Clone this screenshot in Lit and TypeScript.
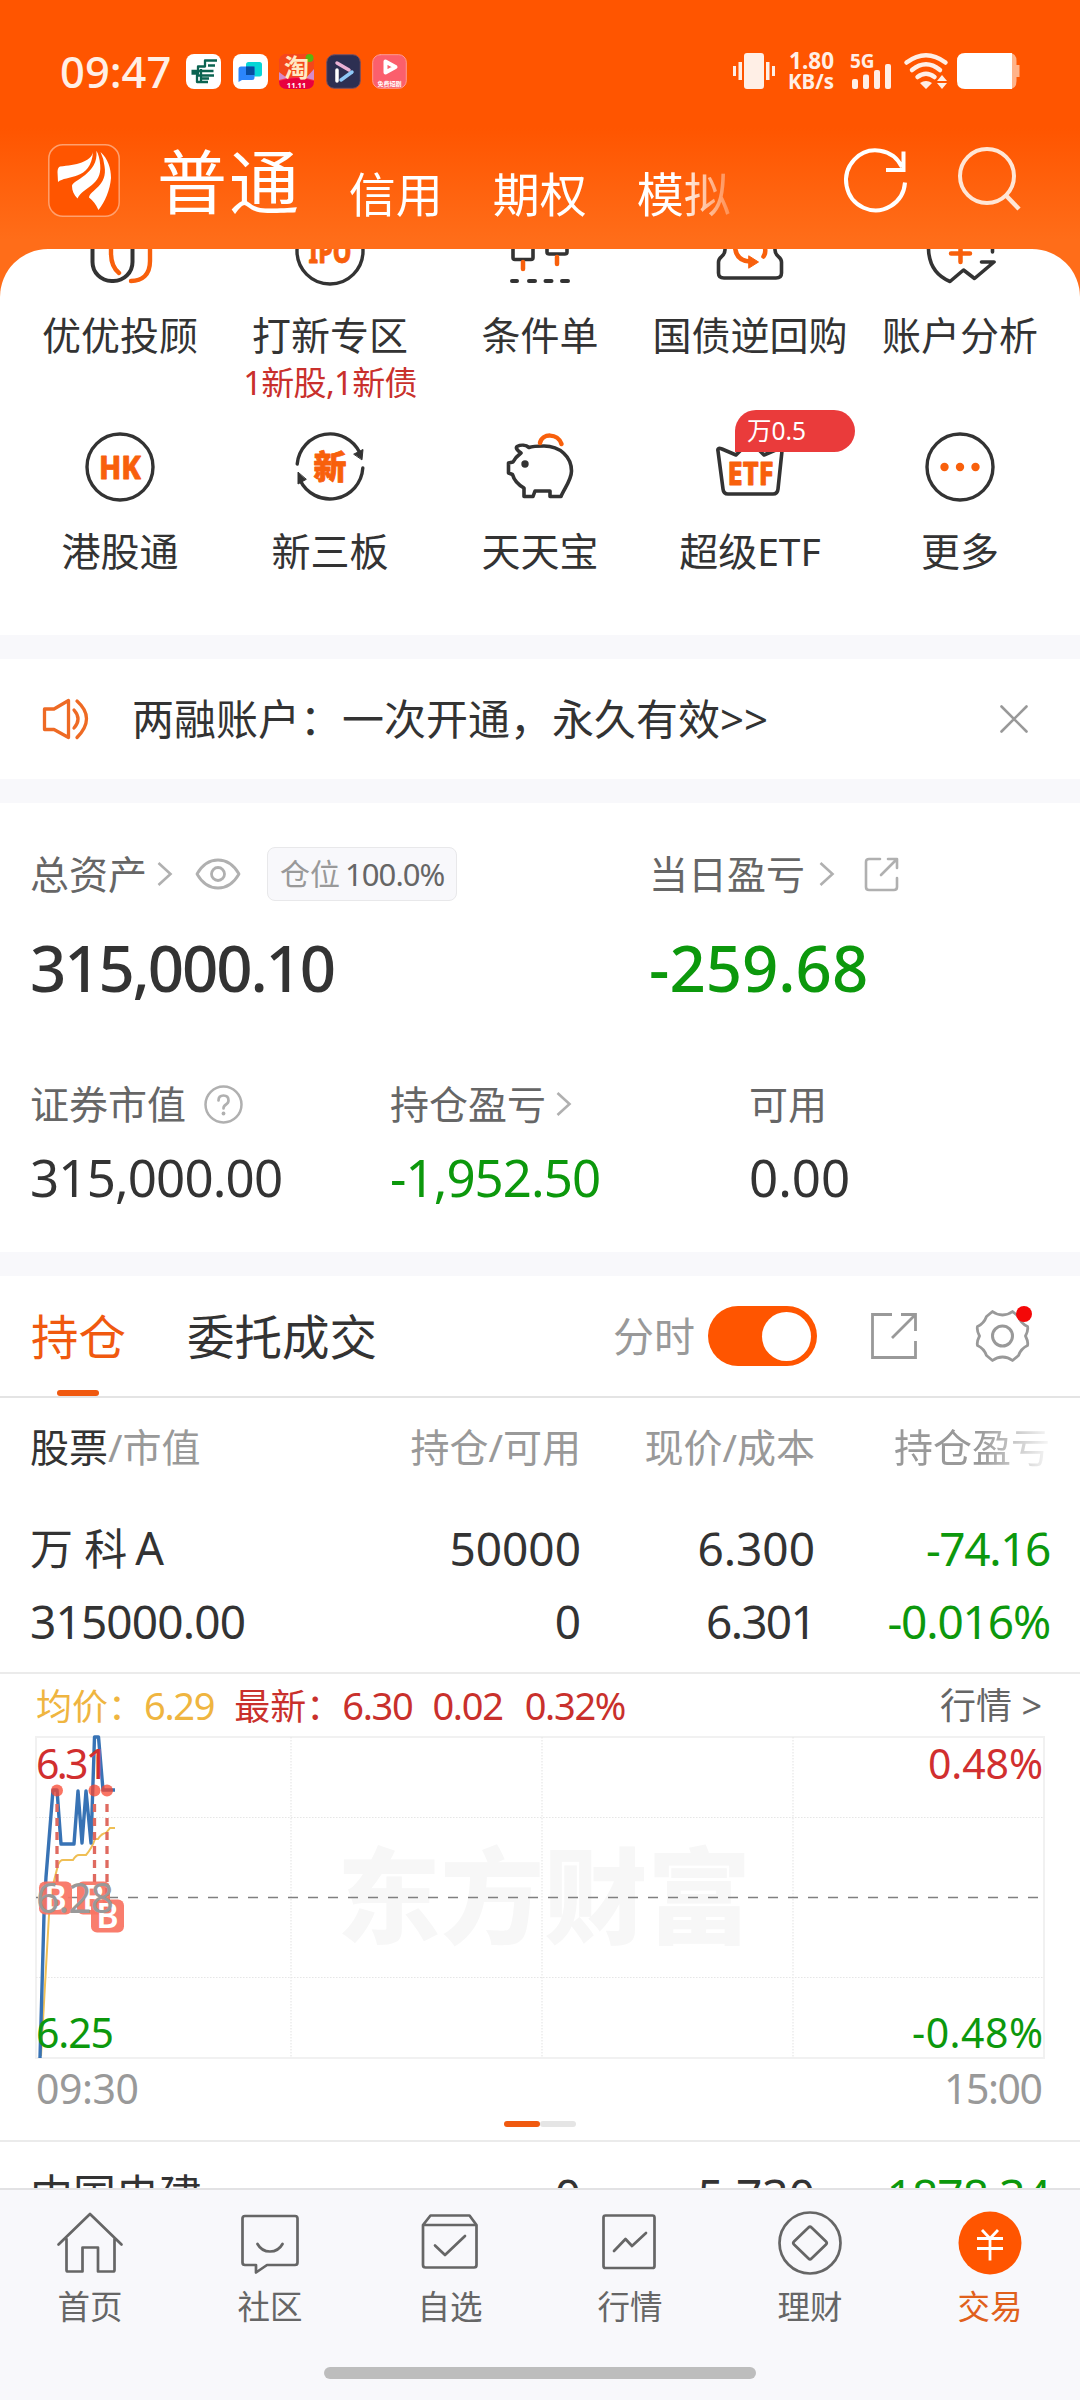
import { LitElement, html, svg, css, nothing, type TemplateResult } from "lit";
import { customElement } from "lit/decorators.js";

const DARK = "#333333";
const ORANGE = "#f8600c";

/* Figures are set tighter the more narrow "1" digits they hold. */
const spacing = (text: string) => {
  const ones = text.split("1").length - 1;
  return ones ? `letter-spacing:${(-(ones * 0.15) / Math.max(1, text.length - 1)).toFixed(4)}em` : nothing;
};
const num = (text: string, cls = "") => html`<span class="num ${cls}" style=${spacing(text)}>${text}</span>`;

const box = (w: number, h: number, body: TemplateResult, cls = "") =>
  html`<svg class="ico ${cls}" width=${w} height=${h} viewBox="0 0 ${w} ${h}" fill="none" stroke-linecap="round" stroke-linejoin="round">${body}</svg>`;

const quickIcons: Record<string, TemplateResult> = {
  advisor: svg`
    <rect x="8.5" y="5" width="40" height="61" rx="19" stroke=${DARK} stroke-width="4"/>
    <path d="M27 20V38C27 48 30 54 35 58M66 20V46C66 60 58 66 47 66" stroke=${ORANGE} stroke-width="4.4"/>`,
  ipo: svg`<circle cx="36" cy="36" r="33" stroke=${DARK} stroke-width="3.4"/>
    <text x="36" y="48" class="glyph" font-size="31" textLength="43" lengthAdjust="spacingAndGlyphs">IPO</text>`,
  order: svg`<rect x="9" y="18" width="20" height="26.500" rx="2" stroke=${DARK} stroke-width="3.600"/>
    <rect x="43" y="8" width="20" height="31" rx="2" stroke=${DARK} stroke-width="3.600"/>
    <path d="M19 47V54M53 42V49" stroke=${ORANGE} stroke-width="4.500"/>
    <path d="M8 66H13M25 66H31M41.500 66H47.500M58 66H64" stroke=${DARK} stroke-width="4"/>`,
  bond: svg`<path d="M11 20V35C11 42 4.500 41 4.500 47V58Q4.500 63 10 63H62Q67.500 63 67.500 58V47C67.500 41 61 42 61 35V20" stroke=${DARK} stroke-width="3.600"/>
    <path d="M21 30C21 41 26 46 36 46.500M50 30C52 35 52 38 49.500 41.500" stroke=${ORANGE} stroke-width="4.500"/>
    <path d="M35 41L44.500 47L35 53Z" fill=${ORANGE} stroke=${ORANGE} stroke-width="1"/>`,
  analysis: svg`<path d="M4.500 20V34C5 50 13 61 26 66.500L39.500 55L50.500 63.500L70 47H57.500M68.500 20V37" stroke=${DARK} stroke-width="3.600"/>
    <path d="M27 38.500H46M36.500 29V47" stroke=${ORANGE} stroke-width="4.500"/>`,
  hk: svg`<circle cx="36" cy="36" r="33" stroke=${DARK} stroke-width="3.4"/>
    <text x="36" y="47.500" class="glyph" font-size="32" textLength="42" lengthAdjust="spacingAndGlyphs">HK</text>`,
  neeq: svg`<path d="M3.200 33A33 33 0 0 1 66 22M68.800 37A33 33 0 0 1 6 49" stroke=${DARK} stroke-width="3.400"/>
    <path d="M60 23L69 18.500L68 28.500ZM12 48.500L4 53L4 41.500Z" fill=${DARK} stroke=${DARK} stroke-width="1"/>
    <text x="36" y="48" class="glyph" font-size="33">新</text>`,
  pig: svg`<path d="M17 22C13 19 11.500 17 13 15.500C17 13.500 22 14 25 16.500C29 15 34 15 40 15C56 15 67.500 26 67.500 40C67.500 49 60 58 57 65.500H46V60H31L29 65.500H20V57C13 53 10 49 8.500 43.500L4.500 42V32L9 31C11 27 13 25 17 22Z" stroke=${DARK} stroke-width="3.600"/>
    <circle cx="21" cy="33" r="3.700" fill=${DARK}/>
    <path d="M36 12C38 2 54 2 57.500 13" stroke=${ORANGE} stroke-width="4.500"/>`,
  etf: svg`<path d="M4 20Q3 16 8 18L22 24L36 10L50 24L64 18Q69 16 68 20L64 58Q63.500 63 59 63H14Q9.500 63 9 58Z" stroke=${DARK} stroke-width="3.600"/>
    <text x="36.500" y="54" class="glyph" font-size="32" textLength="46" lengthAdjust="spacingAndGlyphs">ETF</text>`,
  more: svg`<circle cx="36" cy="36" r="33" stroke=${DARK} stroke-width="3.400"/>
    <g fill=${ORANGE}><circle cx="20.500" cy="36" r="4.200"/><circle cx="36" cy="36" r="4.200"/><circle cx="51.500" cy="36" r="4.200"/></g>`,
};

interface Quick { icon: string; label: string; note?: string; badge?: string }
const quick: Quick[] = [
  { icon: "advisor", label: "优优投顾" },
  { icon: "ipo", label: "打新专区", note: "1新股,1新债" },
  { icon: "order", label: "条件单" },
  { icon: "bond", label: "国债逆回购" },
  { icon: "analysis", label: "账户分析" },
  { icon: "hk", label: "港股通" },
  { icon: "neeq", label: "新三板" },
  { icon: "pig", label: "天天宝" },
  { icon: "etf", label: "超级ETF", badge: "万0.5" },
  { icon: "more", label: "更多" },
];

const chevron = box(18, 26, svg`<path d="M2.500 2L14.500 13L2.500 24" stroke="#b0b0b0" stroke-width="2.600" stroke-linecap="butt" stroke-linejoin="miter"/>`, "chev");

const nav: { label: string; icon: TemplateResult; active?: boolean }[] = [
  { label: "首页", icon: svg`<path d="M1.500 34.500L33 4L64.500 34.500M9.500 29V60Q9.500 61.500 11 61.500H25.500V37.500H41V61.500H56Q57.500 61.500 57.500 60V29"/>` },
  { label: "社区", icon: svg`<path d="M8 6H58Q60.500 6 60.500 8.500V52.500Q60.500 55 58 55H30L19 62.500V55H8Q5.500 55 5.500 52.500V8.500Q5.500 6 8 6ZM20.500 34C26 44 40 44 45.500 34"/>` },
  { label: "自选", icon: svg`<path d="M6 15L13.500 5.500H52.500L59.500 15V55Q59.500 57.500 57 57.500H8.500Q6 57.500 6 55V15H59.500M18 35.500L28 45L48 26"/>` },
  { label: "行情", icon: svg`<rect x="6.500" y="5.500" width="51" height="52.500" rx="2"/><path d="M17 41L28.500 29L35 36L49 23"/>` },
  { label: "理财", icon: svg`<circle cx="33" cy="33" r="30.500"/><path d="M31.500 17.500Q33 16 34.500 17.500L49 31.500Q50.500 33 49 34.500L34.500 48.500Q33 50 31.500 48.500L17 34.500Q15.500 33 17 31.500Z"/>` },
  { label: "交易", active: true, icon: svg`<circle cx="33" cy="33" r="31.500" fill="#ff5500" stroke="none"/><path d="M25 20L33 28.500L41 20M20 28.500H46M20 38.500H46M33 28.500V50.500" stroke="#fff" stroke-width="2.800" stroke-linecap="butt"/>` },
];

const statusApps = [
  svg`<rect width="35" height="35" rx="8" fill="#fff"/><path d="M31 6.500H19V12.500H12V19.500H5.500M29 11.500H22M27.500 17H5.500M28 21.500H11V28H22M15 15V29M23 24.500H15" stroke="#0b6350" stroke-width="2.300" stroke-linecap="butt"/>`,
  svg`<rect width="35" height="35" rx="8" fill="#fff"/><rect x="13" y="8" width="16" height="14.500" rx="2.500" fill="#06d6d6"/><path d="M8 12.500H19Q21.500 12.500 21.500 15V23.500Q21.500 26 19 26H9L5.500 28V15Q5.500 12.500 8 12.500Z" fill="#2b86fb"/><rect x="13" y="12.500" width="8.500" height="8.500" fill="#074da0"/>`,
  svg`<rect width="35" height="35" rx="8" fill="#f6324a"/><path d="M0 9Q0 0 9 0H26Q35 2 35 9V26Q18 20 0 25Z" fill="#f4471a"/><path d="M0 18L8 24L0 26ZM35 15L27 24L35 26Z" fill="#d58ac8"/><circle cx="30.500" cy="4" r="4" fill="#5ab510"/><path d="M0 27Q18 21 35 27Q35 35 27 35H8Q0 35 0 27Z" fill="#e8003f"/><text x="17.500" y="23" class="mini" font-size="25" fill="#ffe9c4">淘</text><text x="17.500" y="34" class="mini" font-size="7.500" fill="#fff">11.11</text>`,
  svg`<rect x=".7" y=".7" width="33.600" height="33.600" rx="7.500" fill="#2d2f52" stroke="#7a5060" stroke-width="1"/><path d="M11 16V27" stroke="#fff" stroke-width="3.500"/><path d="M11 9L23 16" stroke="#eab2d6" stroke-width="3.500"/><path d="M26 18L15 26" stroke="#8fc9f7" stroke-width="3.500"/>`,
  svg`<rect x=".7" y=".7" width="33.600" height="33.600" rx="7.500" fill="#fb5f6c" stroke="#ff9a90" stroke-width="1"/><path d="M13.500 7.500V18.500L23.500 13Z" stroke="#fff" stroke-width="4"/><text x="17.500" y="32" class="mini" font-size="6" fill="#fff">免费短剧</text>`,
];

/* Buy marks: x of the trade, then the centre of its flag. */
const marks = [
  { x: 57, fx: 55, fy: 1898 },
  { x: 94.5, fx: 93, fy: 1898 },
  { x: 107, fx: 107, fy: 1916 },
];

@customElement("app-root")
export class AppRoot extends LitElement {
  static styles = css`
    :host { display: block; width: 1080px; height: 2400px; overflow: hidden; }
    * { box-sizing: border-box; }
    .app { display: flex; flex-direction: column; width: 1080px; height: 2400px; background: #ff6d19; color: #333;
      font-family: "Noto Sans", "Noto Sans CJK SC", sans-serif; font-size: 39px; line-height: 48px; white-space: nowrap; }
    .ico { display: block; flex: none; overflow: visible; }
    .num { font-kerning: none; }
    .glyph { font-weight: 800; fill: #f8600c; stroke: #f8600c; stroke-width: 0.8px; text-anchor: middle; }
    .mini { font-weight: 700; text-anchor: middle; }
    .top { height: 249px; flex: none; background: linear-gradient(#ff5500 0, #ff5500 128px, #ff6d19 240px); }
    .status { display: flex; align-items: center; height: 142px; padding: 0 60px 0 60px; color: #ffefe6; }
    .time { font-size: 43.500px; font-weight: 500; width: 126px; }
    .apps { display: flex; gap: 11.500px; flex: 1; }
    .rate { display: flex; flex-direction: column; width: 48px; margin: 0 15px 0 11px; align-items: flex-end; font-size: 22.500px; line-height: 21px; font-weight: 700; }
    .rate .unit { font-size: 20.500px; }
    .net { display: flex; flex-direction: column; width: 42px; font-size: 19px; line-height: 16px; font-weight: 700; margin: 0 12px 0 1px; height: 36px; }
    .battery { margin-left: 9px; }
    .head { display: flex; height: 76px; align-items: center; padding: 0 58px 0 48px; color: #fff; }
    .head .on { font-size: 70px; line-height: 72px; letter-spacing: 2px; margin: 4px 0 0 37px; width: 195px; }
    .modes { display: flex; gap: 50px; font-size: 47px; line-height: 76px; margin-top: 28px; width: 400px;
      -webkit-mask-image: linear-gradient(90deg, #000 330px, transparent 400px); mask-image: linear-gradient(90deg, #000 330px, transparent 400px); }
    .refresh { margin-left: 103px; }
    .find { margin-left: 50px; }
    .body { flex: 1; min-height: 0; overflow: hidden; border-radius: 48px 48px 0 0; background: #fff; }
    .quick { display: grid; grid-template-columns: repeat(5, 210px); grid-auto-rows: 216px; justify-content: center; height: 420px; margin-top: -34px; }
    .cell { position: relative; display: flex; flex-direction: column; align-items: center; }
    .cell .label { margin-top: 24px; }
    .note { color: #c9302c; font-size: 33px; letter-spacing: -0.7px; }
    .tag { position: absolute; left: 90px; top: -21px; width: 120px; height: 42px; border-radius: 21px 21px 21px 0; background: #ea3b3b; color: #fff; font-size: 24.500px; line-height: 42px; padding-left: 12px; }
    .gap { height: 24px; background: #f8f8fb; }
    .notice { display: flex; align-items: center; height: 120px; padding: 0 52px 0 41px; font-size: 42px; }
    .notice .msg { flex: 1; margin-left: 42px; }
    .assets { height: 449px; padding: 44px 30px 0; color: #666; }
    .two { display: grid; grid-template-columns: 619px 1fr; }
    .three { display: grid; grid-template-columns: 360px 359px 1fr; margin-top: 69px; }
    .cap { display: flex; align-items: center; height: 54px; }
    .chev { margin-left: 9px; }
    .wide .chev { margin-left: 13px; }
    .eye { margin-left: 21px; }
    .pos { display: flex; align-items: center; gap: 5px; height: 54px; width: 190px; border: 1.500px solid #e8e8ea; border-radius: 8px; background: #f8f8fb; margin-left: 26px; padding-left: 12px; color: #999; font-size: 30px; }
    .pos .num { color: #666; font-size: 31px; }
    .share { margin-left: 28px; }
    .help { margin-left: 18px; }
    .big { font-size: 63.500px; line-height: 80px; font-weight: 500; color: #333; margin-top: 27px; }
    .mid { font-size: 51px; line-height: 64px; color: #333; margin-top: 14px; }
    .big.green, .mid.green, .green { color: #0c980c; }
    .tabs { display: flex; height: 122px; border-bottom: 2px solid #e4e4e4; padding: 0 50px 0 31px; font-size: 47.500px; line-height: 121px; }
    .tab { position: relative; margin-right: 61px; }
    .tab.sel { color: #f0590f; }
    .tab.sel::after { content: ""; position: absolute; left: 26px; bottom: 0; width: 42px; height: 6px; border-radius: 3px; background: #f0590f; }
    .tools { display: flex; align-items: center; flex: 1; justify-content: flex-end; color: #999; font-size: 41px; }
    .switch { width: 109px; height: 60px; border-radius: 30px; background: #ff5500; margin: 0 54px 0 13px; display: flex; justify-content: flex-end; align-items: center; padding-right: 6px; }
    .knob { width: 49px; height: 49px; border-radius: 50%; background: #fff; }
    .gearwrap { position: relative; margin-left: 58px; }
    .dot { position: absolute; right: -2px; top: -3px; width: 16px; height: 16px; border-radius: 50%; background: #f40808; }
    .row { display: grid; grid-template-columns: 351px 200px 234px 235px; align-content: start; padding: 0 30px; text-align: right; }
    .row > :nth-child(4n + 1) { text-align: left; }
    .cols { height: 97px; line-height: 97px; color: #999; }
    .cols b { font-weight: 400; color: #333; }
    .fade { -webkit-mask-image: linear-gradient(90deg, #000 165px, transparent 240px); mask-image: linear-gradient(90deg, #000 165px, transparent 240px); }
    .hold { height: 179px; padding-top: 17px; font-size: 46px; line-height: 72px; border-bottom: 2px solid #ebebeb; }
    .hold .name { font-size: 43px; }
    .hold .share-class { margin-left: 8px; font-size: 45px; }
    .info { display: flex; height: 61px; line-height: 63px; padding: 0 38px 0 36px; font-size: 36px; color: #c9302c; }
    .info .num { font-size: 38px; letter-spacing: -1.300px; }
    .info .avg { color: #efb540; margin-right: 20px; }
    .info .n { margin-right: 20px; }
    .info span.num.n { margin-right: 22px; }
    .info .more { color: #666; margin-left: auto; }
    .chart { display: block; }
    .chart text { font-size: 41px; font-kerning: none; }
    .chart text.wm { font-size: 104px; font-weight: 900; fill: #f7f7f7; }
    .chart text.flag { font-size: 34px; font-weight: 600; fill: #fff; text-anchor: middle; }
    .pager { display: flex; justify-content: center; height: 21px; border-bottom: 2px solid #ebebeb; }
    .pager i { width: 36px; height: 6px; border-radius: 3px; background: #e5e5e5; }
    .pager i.now { background: #f0590f; }
    .nav { flex: none; height: 212px; background: #f8f8fb; border-top: 2px solid #e2e2e4; display: flex; flex-direction: column; align-items: center; }
    .items { display: grid; grid-template-columns: repeat(6, 180px); height: 177px; padding-top: 20px; }
    .item { display: flex; flex-direction: column; align-items: center; font-size: 32.500px; line-height: 40px; color: #666; }
    .item .ico { stroke: #666; stroke-width: 2.700px; margin-bottom: 11px; }
    .item.active { color: #e0601c; }
    .pill { width: 432px; height: 12px; border-radius: 6px; background: #bdbdbd; }
  `;

  private header() {
    return html`<header class="top">
      <div class="status">
        <span class="time">09:47</span>
        <div class="apps">${statusApps.map((a) => box(35, 35, a))}</div>
        ${box(42, 36, svg`<g fill="#ffefe6"><rect x="11" y="0" width="20" height="36" rx="3"/><rect x="5.500" y="9" width="3.500" height="18"/><rect x="0" y="13" width="3" height="10"/><rect x="33" y="9" width="3.500" height="18"/><rect x="39" y="13" width="3" height="10"/></g>`)}
        <div class="rate"><span>1.80</span><span class="unit">KB/s</span></div>
        <div class="net"><span>5G</span>
          ${box(42, 20, svg`<g fill="#ffefe6"><rect x="2" y="10" width="6" height="10" rx="2"/><rect x="13" y="5.500" width="6" height="14.500" rx="2"/><rect x="24" y="1" width="6" height="19" rx="2"/><rect x="35" y="-5" width="6" height="25" rx="2"/></g>`)}
        </div>
        ${box(44, 36, svg`<path d="M2.500 9.500Q22 -5 41.500 9.500M8 17Q22 5.500 36 17M13.500 24Q22 17.500 30.500 24" stroke="#ffefe6" stroke-width="4.500"/><path d="M22 36L16 30Q22 26 28 30ZM38 22L43 28H33ZM38 36L43 30H33Z" fill="#ffefe6"/>`)}
        ${box(63, 36, svg`<path d="M45 0H52Q59.500 0 59.500 8V12H62.500V24H59.500V28Q59.500 36 52 36H45Z" fill="#ffb38a"/><path d="M8 0H55V36H8Q0 36 0 28V8Q0 0 8 0Z" fill="#fff"/>`, "battery")}
      </div>
      <div class="head">
        ${box(72, 73, svg`<rect x=".8" y=".8" width="70.400" height="71.400" rx="14" fill="#ff5500" stroke="#ffa06e" stroke-width="1.500"/>
          <g fill="#fff"><path d="M45 8C43 18 28 21 12 22.500Q9.500 23.500 9.500 28L10 38C18 31 43 37 45 8Z"/><path d="M48.400 6.700C51 30 24 36 24 42C24 47 26 51 29.500 54.500C36 42 54 42 52.200 21C51.800 15 50.500 10 48.400 6.700Z"/><path d="M52.500 8C60 15 63 24 63 34C62 46 57 58 50.500 66Q47 58 41 53.500C42 46 60 42 56.500 22Q55.500 14 52.500 8Z"/></g>`)}
        <span class="on">普通</span>
        <div class="modes"><span>信用</span><span>期权</span><span>模拟</span></div>
        ${box(63, 64, svg`<path d="M60 34.500A29.500 30 0 1 1 57 19M41 22H58.500V3.500" stroke="#fff" stroke-width="4" stroke-linecap="butt" stroke-linejoin="miter"/>`, "refresh")}
        ${box(64, 66, svg`<circle cx="29" cy="29" r="27" stroke="#ffe6d6" stroke-width="4"/><path d="M48 48.500L61 62" stroke="#ffe6d6" stroke-width="4.500" stroke-linecap="butt"/>`, "find")}
      </div>
    </header>`;
  }

  private assets() {
    return html`<section class="assets">
      <div class="two">
        <div><div class="cap">总资产${chevron}
          ${box(46, 32, svg`<path d="M2 16Q10 2 23 2T44 16Q36 30 23 30T2 16Z" stroke="#b0b0b0" stroke-width="2.800"/><circle cx="23" cy="16" r="6.500" stroke="#b0b0b0" stroke-width="2.800"/>`, "eye")}
          <span class="pos">仓位${num("100.0%")}</span></div>
          <div class="big">${num("315,000.10")}</div></div>
        <div><div class="cap wide">当日盈亏${chevron}
          ${box(35, 35, svg`<path d="M16 2H5Q2 2 2 5V30Q2 33 5 33H30Q33 33 33 30V21M24 2H33V11M32 3L17 18" stroke="#b0b0b0" stroke-width="2.600"/>`, "share")}</div>
          <div class="big green">${num("-259.68")}</div></div>
      </div>
      <div class="three">
        <div><div class="cap">证券市值
          ${box(39, 39, svg`<circle cx="19.500" cy="19.500" r="18" stroke="#b0b0b0" stroke-width="2.500"/><path d="M14.500 15.500Q14.500 10.500 19.500 10.500T24.500 15.500Q24.500 18 22 19.500T19.500 23.500" stroke="#b0b0b0" stroke-width="2.700"/><circle cx="19.500" cy="28.500" r="1.900" fill="#b0b0b0"/>`, "help")}</div>
          <div class="mid">${num("315,000.00")}</div></div>
        <div><div class="cap">持仓盈亏${chevron}</div><div class="mid green">${num("-1,952.50")}</div></div>
        <div><div class="cap">可用</div><div class="mid">${num("0.00")}</div></div>
      </div>
    </section>`;
  }

  private fig(x: number, y: number, text: string, len: number, color: string, end = false) {
    return svg`<text x=${x} y=${y} fill=${color} textLength=${len} text-anchor=${end ? "end" : "start"}>${text}</text>`;
  }

  private chart() {
    return html`<svg class="chart" width="1080" height="386" viewBox="0 1735 1080 386" fill="none">
      <text class="wm" x="337" y="1936" textLength="414" lengthAdjust="spacingAndGlyphs">东方财富</text>
      <rect x="36" y="1737" width="1008" height="321" stroke="#f1f1f1" stroke-width="2"/>
      <path d="M291 1737V2058M542 1737V2058M793 1737V2058M36 1817.500H1044M36 1977.500H1044" stroke="#e6e6e6" stroke-width="1.200" stroke-dasharray="1.500 1.500"/>
      <path d="M36 1897.500H1044" stroke="#808080" stroke-width="1.300" stroke-dasharray="10 10" stroke-dashoffset="8"/>
      <path d="M41 2056L45 1985L49 1915L53 1885L58 1865Q60 1860 63 1860H73Q76 1855 79 1855H86Q92 1848 95 1839H98Q102 1833 106 1833L110 1828H115" stroke="#efbf55" stroke-width="2"/>
      <path d="M40 2058L44 1915L46 1877L53 1790H57L61 1844H74L78 1791L82 1843L86 1791L91 1843L94.500 1737H98.500L103 1790H115" stroke="#3873b5" stroke-width="3.400" stroke-linejoin="round"/>
      ${marks.map((m) => svg`
        <path d="M${m.x} 1804V${m.fy - 16}" stroke="#df6a60" stroke-width="3.300" stroke-dasharray="8 6"/>
        <circle cx=${m.x} cy="1790.500" r="6" fill="#f8452f" opacity=".75"/>
        <rect x=${m.fx - 16} y=${m.fy - 16.5} width="33" height="33" rx="6" fill="#f97362" opacity=".93"/>
        <text class="flag" x=${m.fx + 0.5} y=${m.fy + 12}>B</text>`)}
      ${this.fig(36, 1779, "6.31", 73, "#d12f2f")}
      ${this.fig(36, 1913, "6.28", 78, "#999")}
      ${this.fig(36, 2048, "6.25", 78, "#0c980c")}
      ${this.fig(1043, 1779, "0.48%", 115, "#d12f2f", true)}
      ${this.fig(1043, 2048, "-0.48%", 131, "#0c980c", true)}
      ${this.fig(36, 2104, "09:30", 103, "#999")}
      ${this.fig(1043, 2104, "15:00", 99, "#999", true)}
    </svg>`;
  }

  render() {
    return html`<div class="app">
      ${this.header()}
      <main class="body">
        <section class="quick">
          ${quick.map((q) => html`<div class="cell">
            ${box(72, 72, quickIcons[q.icon])}
            <span class="label">${q.label}</span>
            ${q.note ? html`<span class="note">${q.note}</span>` : nothing}
            ${q.badge ? html`<span class="tag">${q.badge}</span>` : nothing}
          </div>`)}
        </section>
        <div class="gap"></div>
        <section class="notice">
          ${box(49, 42, svg`<path d="M3.500 11H13L27.500 2.500V39.500L13 31.500H3.500ZM33 12Q41 21 33 30M36 3Q55 20 36 39.500" stroke="#ee6a24" stroke-width="3.300"/>`)}
          <span class="msg">两融账户：一次开通，永久有效&gt;&gt;</span>
          ${box(28, 28, svg`<path d="M1.500 1.500L26.500 26.500M26.500 1.500L1.500 26.500" stroke="#999" stroke-width="2.600"/>`)}
        </section>
        <div class="gap"></div>
        ${this.assets()}
        <div class="gap"></div>
        <section class="tabs">
          <span class="tab sel">持仓</span><span class="tab">委托成交</span>
          <div class="tools"><span>分时</span><span class="switch"><i class="knob"></i></span>
            ${box(46, 46, svg`<path d="M21 1.500H1.500V44.500H44.500V28M30 1.500H44.500V18M43.500 2.500L21 25" stroke="#999" stroke-width="2.800" stroke-linecap="butt" stroke-linejoin="miter"/>`)}
            <span class="gearwrap">${box(55, 54, svg`<path d="M11.500 7.500L17.500 2.500Q22 6 27.500 6T37.500 2.500L43.500 7.500Q46 14.500 52.500 17.500Q53.500 21 50.500 27Q53.500 33 52.500 36.500Q46 39.500 43.500 46.500L37.500 51.500Q33 48 27.500 48T17.500 51.500L11.500 46.500Q9 39.500 2.500 36.500Q1.500 33 4.500 27Q1.500 21 2.500 17.500Q9 14.500 11.500 7.500Z" stroke="#999" stroke-width="2.800"/><circle cx="27.500" cy="27" r="10" stroke="#999" stroke-width="3"/>`)}<i class="dot"></i></span>
          </div>
        </section>
        <div class="row cols"><span><b>股票</b>/市值</span><span>持仓/可用</span><span>现价/成本</span><span class="fade">持仓盈亏</span></div>
        <div class="row hold">
          <span class="name">万 科<span class="share-class">A</span></span>${num("50000")}${num("6.300")}${num("-74.16", "green")}
          ${num("315000.00")}${num("0")}${num("6.301")}${num("-0.016%", "green")}
        </div>
        <div class="info">
          <span class="avg">均价：${num("6.29")}</span><span class="n">最新：${num("6.30")}</span>
          ${num("0.02", "n")}${num("0.32%", "n")}<span class="more">行情 &gt;</span>
        </div>
        ${this.chart()}
        <div class="pager"><i class="now"></i><i></i></div>
        <div class="row hold">
          <span class="name">中国电建</span>${num("0")}${num("5.730")}${num("-1878.34", "green")}
        </div>
      </main>
      <nav class="nav">
        <div class="items">${nav.map((n) => html`<div class="item ${n.active ? "active" : ""}">${box(66, 66, n.icon)}<span>${n.label}</span></div>`)}</div>
        <div class="pill"></div>
      </nav>
    </div>`;
  }
}
